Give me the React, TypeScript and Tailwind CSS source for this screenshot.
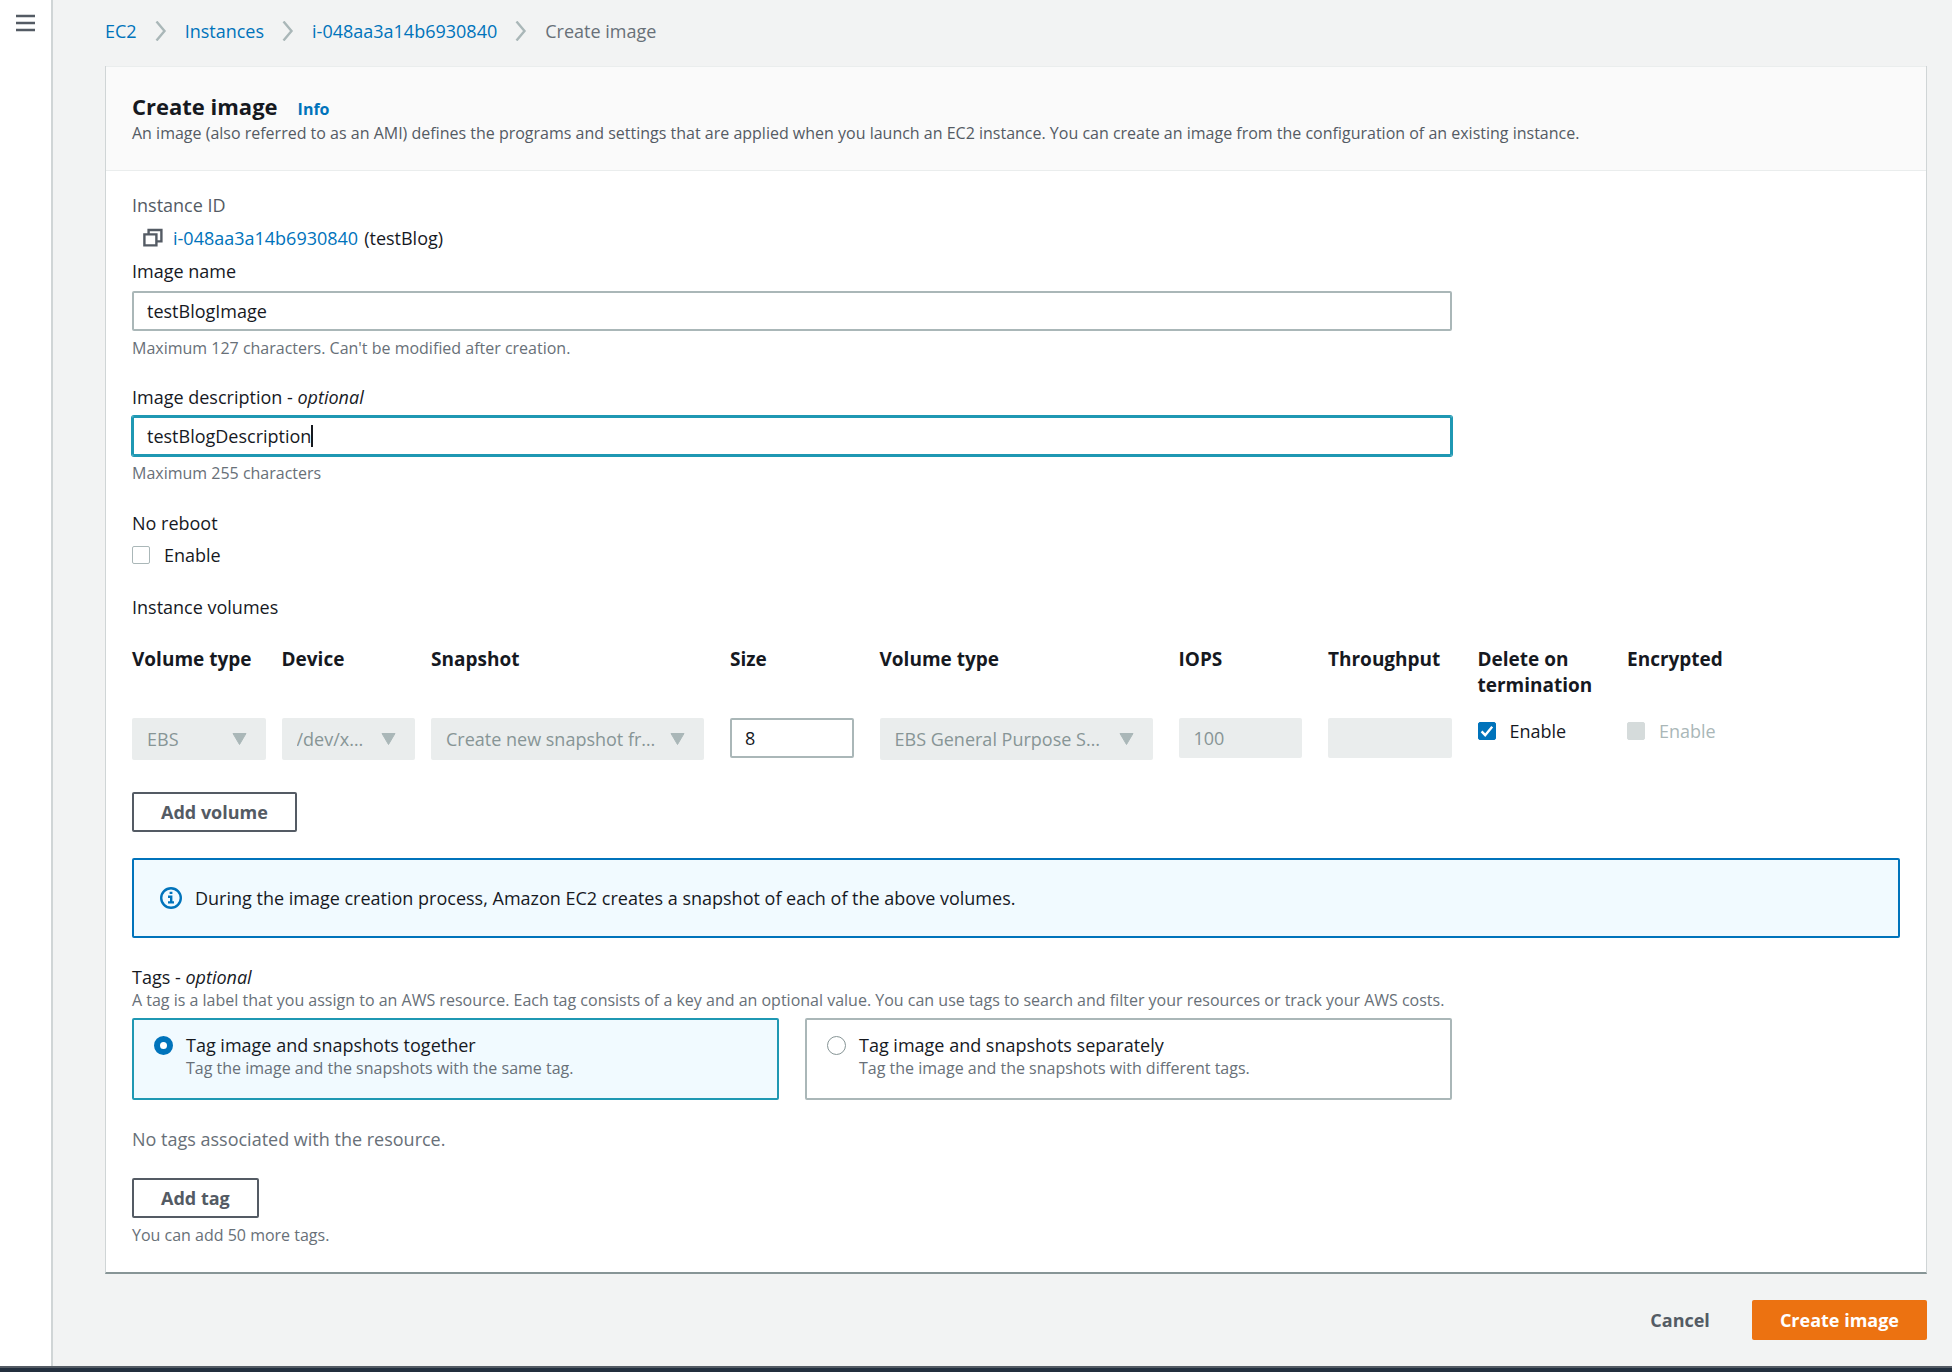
import { useState } from 'react'

const outlineButton =
  'h-10 rounded-xs border-2 border-[#545b64] bg-white px-[27px] font-bold text-[#545b64] hover:bg-[#fafafa]'

function Separator() {
  return (
    <svg className="mx-[18px] h-5 w-[12px]" viewBox="0 0 12 20" fill="none" aria-hidden="true">
      <path d="M1.5 0.5 L9.5 10 L1.5 19.5" stroke="#aab7b8" strokeWidth="2.4" />
    </svg>
  )
}

function CopyIcon() {
  return (
    <svg className="h-5 w-5" viewBox="0 0 20 20" fill="none" stroke="#545b64" strokeWidth="2.4" aria-hidden="true">
      <path d="M1.4 6.4h12v11h-12z" />
      <path d="M5.6 6V2h12.8v11.4h-4.6" />
    </svg>
  )
}

function DisabledSelect({ label, value }: { label: string; value: string }) {
  return (
    <div className="relative">
      <select
        aria-label={label}
        disabled
        className="h-[42px] w-full appearance-none rounded-xs bg-[#eaeded] pr-8 pl-[15px] text-[#879596] opacity-100"
      >
        <option>{value}</option>
      </select>
      <svg className="pointer-events-none absolute top-[15px] right-[19px] h-3 w-[15px]" viewBox="0 0 15 12" aria-hidden="true">
        <path d="M1 0.5h13L7.5 11.5z" fill="#aab7b8" stroke="#aab7b8" strokeLinejoin="round" />
      </svg>
    </div>
  )
}

function Checkbox({ label, checked, disabled, onChange }: any) {
  return (
    <label className={`flex items-center gap-[14px] ${disabled ? 'text-[#aab7b8]' : ''}`}>
      <span className="relative flex">
        <input
          type="checkbox"
          checked={checked}
          disabled={disabled}
          onChange={(e) => onChange?.(e.target.checked)}
          className="h-[18px] w-[18px] appearance-none rounded-xs border border-[#aab7b8] bg-white checked:border-[#0073bb] checked:bg-[#0073bb] disabled:border-[#d5dbdb] disabled:bg-[#d5dbdb]"
        />
        {checked && (
          <svg className="pointer-events-none absolute inset-0 h-[18px] w-[18px]" viewBox="0 0 18 18" fill="none" aria-hidden="true">
            <path d="M3.6 9.4l3.6 3.8 7-8.4" stroke="#fff" strokeWidth="2.4" />
          </svg>
        )}
      </span>
      {label}
    </label>
  )
}

function TagTile({ title, text, checked, onSelect }: any) {
  return (
    <label
      className={`flex min-h-[82px] items-start gap-[13px] rounded-xs border-2 px-5 pt-3 ${
        checked ? 'border-[#1f98b3] bg-[#f1faff]' : 'border-[#aab7b8] bg-white'
      }`}
    >
      <input
        type="radio"
        name="tagMode"
        checked={checked}
        onChange={onSelect}
        className="mt-1 h-[19px] w-[19px] shrink-0 appearance-none rounded-full border border-[#879596] bg-white checked:border-[6px] checked:border-[#0073bb]"
      />
      <span>
        <span className="block">{title}</span>
        <span className="block text-base leading-5 text-[#687078]">{text}</span>
      </span>
    </label>
  )
}

export default function App() {
  const [name, setName] = useState('testBlogImage')
  const [description, setDescription] = useState('testBlogDescription')
  const [noReboot, setNoReboot] = useState(false)
  const [size, setSize] = useState('8')
  const [deleteOnTermination, setDeleteOnTermination] = useState(true)
  const [tagMode, setTagMode] = useState('together')

  return (
    <div className="flex min-h-screen flex-col bg-[#f2f3f3] font-['Open_Sans',sans-serif] text-lg leading-[26px] text-[#16191f]">
      <div className="flex flex-1">
        <aside className="w-[53px] shrink-0 border-r-2 border-[#d0d5d6] bg-white pt-[14px] pl-4">
          <button aria-label="Open navigation" className="block">
            <svg className="h-[18px] w-[19px]" viewBox="0 0 19 18" stroke="#545b64" strokeWidth="2.4" aria-hidden="true">
              <path d="M0 2h19M0 9h19M0 16h19" />
            </svg>
          </button>
        </aside>

        <main className="min-w-0 flex-1 pt-[18px] pr-[25px] pb-6 pl-[52px]">
          <nav aria-label="Breadcrumb" className="flex items-center text-[#0073bb]">
            <a href="#ec2">EC2</a>
            <Separator />
            <a href="#instances">Instances</a>
            <Separator />
            <a href="#instance">i-048aa3a14b6930840</a>
            <Separator />
            <span className="text-[#687078]">Create image</span>
          </nav>

          <section className="mt-[22px] border-x border-b-2 border-x-[#d0d5d6] border-b-[#879596] bg-white">
            <header className="border-t border-b border-t-[#eaeded] border-b-[#eaeded] bg-[#fafafa] px-[26px] pt-[23px] pb-[26px]">
              <div className="flex items-baseline gap-5">
                <h1 className="text-[22px] leading-8 font-bold">Create image</h1>
                <a href="#info" className="text-base leading-5 font-bold text-[#0073bb]">Info</a>
              </div>
              <p className="text-base leading-[22px] text-[#545b64]">
                An image (also referred to as an AMI) defines the programs and settings that are applied when you launch an EC2 instance. You can create an image from the configuration of an existing instance.
              </p>
            </header>

            <form className="px-[26px] pt-[21px] pb-[26px]" onSubmit={(e) => e.preventDefault()}>
              <div className="text-[#545b64]">Instance ID</div>
              <div className="mt-[7px] flex items-center pl-[11px]">
                <button type="button" aria-label="Copy instance ID"><CopyIcon /></button>
                <a href="#instance" className="mr-[6px] ml-[10px] text-[#0073bb]">i-048aa3a14b6930840</a>
                <span>(testBlog)</span>
              </div>

              <div className="mt-[7px] mr-[calc(25%+6px)]">
                <label htmlFor="name" className="block">Image name</label>
                <input
                  id="name"
                  value={name}
                  onChange={(e) => setName(e.target.value)}
                  className="mt-[7px] block h-10 w-full rounded-xs border-2 border-[#aab7b8] px-[13px] outline-none"
                />
                <p className="mt-[6px] text-base leading-[22px] text-[#687078]">
                  Maximum 127 characters. Can't be modified after creation.
                </p>

                <label htmlFor="description" className="mt-[25px] block">
                  Image description - <i>optional</i>
                </label>
                <div className="mt-[6px] flex h-10 items-center rounded-xs border-2 border-[#1f98b3] px-[13px] ring-1 ring-[#1f98b3]">
                  <input
                    id="description"
                    value={description}
                    onChange={(e) => setDescription(e.target.value)}
                    className="[field-sizing:content] caret-transparent outline-none"
                  />
                  <span className="h-[22px] w-[2px] bg-[#16191f]" />
                </div>
                <p className="mt-[6px] text-base leading-[22px] text-[#687078]">Maximum 255 characters</p>
              </div>

              <div className="mt-[26px]">No reboot</div>
              <div className="mt-[6px] flex">
                <Checkbox label="Enable" checked={noReboot} onChange={setNoReboot} />
              </div>

              <div className="mt-[26px]">Instance volumes</div>
              <table className="mt-[26px] w-[calc(100%+26px)] table-fixed text-left align-top">
                <colgroup>
                  <col />
                  <col />
                  <col span={2} />
                  <col />
                  <col span={2} />
                  <col span={5} />
                </colgroup>
                <thead className="text-[19px]">
                  <tr className="align-top">
                    <th>Volume type</th>
                    <th>Device</th>
                    <th colSpan={2}>Snapshot</th>
                    <th>Size</th>
                    <th colSpan={2}>Volume type</th>
                    <th>IOPS</th>
                    <th>Throughput</th>
                    <th>Delete on termination</th>
                    <th colSpan={2}>Encrypted</th>
                  </tr>
                </thead>
                <tbody>
                  <tr className="align-top">
                    <td className="pt-5 pr-4"><DisabledSelect label="Volume type" value="EBS" /></td>
                    <td className="pt-5 pr-4"><DisabledSelect label="Device" value="/dev/x…" /></td>
                    <td colSpan={2} className="pt-5 pr-[26px]"><DisabledSelect label="Snapshot" value="Create new snapshot fr…" /></td>
                    <td className="pt-5 pr-[26px]">
                      <input
                        aria-label="Size"
                        value={size}
                        onChange={(e) => setSize(e.target.value)}
                        className="block h-10 w-full rounded-xs border-2 border-[#aab7b8] px-[13px]"
                      />
                    </td>
                    <td colSpan={2} className="pt-5 pr-[26px]"><DisabledSelect label="EBS volume type" value="EBS General Purpose S…" /></td>
                    <td className="pt-5 pr-[26px]">
                      <input aria-label="IOPS" disabled value="100" className="block h-10 w-full rounded-xs bg-[#eaeded] px-[15px] text-[#879596]" />
                    </td>
                    <td className="pt-5 pr-[26px]">
                      <input aria-label="Throughput" disabled value="" className="block h-10 w-full rounded-xs bg-[#eaeded] px-[15px]" />
                    </td>
                    <td className="pt-5">
                      <Checkbox label="Enable" checked={deleteOnTermination} onChange={setDeleteOnTermination} />
                    </td>
                    <td colSpan={2} className="pt-5"><Checkbox label="Enable" checked={false} disabled /></td>
                  </tr>
                </tbody>
              </table>

              <button type="button" className={`mt-8 ${outlineButton}`}>Add volume</button>

              <div className="mt-[26px] flex min-h-20 items-center gap-[13px] rounded-xs border-2 border-[#0073bb] bg-[#f1faff] px-[26px]">
                <svg className="h-[22px] w-[22px]" viewBox="0 0 22 22" fill="none" stroke="#0073bb" aria-hidden="true">
                  <circle cx="11" cy="11" r="9.8" strokeWidth="2.4" />
                  <path d="M9.6 5.9h2.8M8 9.8h3.2v5.6M8 15.4h6" strokeWidth="2.4" />
                </svg>
                <span>During the image creation process, Amazon EC2 creates a snapshot of each of the above volumes.</span>
              </div>

              <div className="mt-[26px]">Tags - <i>optional</i></div>
              <p className="text-base leading-5 text-[#687078]">
                A tag is a label that you assign to an AWS resource. Each tag consists of a key and an optional value. You can use tags to search and filter your resources or track your AWS costs.
              </p>
              <div className="mt-2 mr-[calc(25%+6px)] grid grid-cols-2 gap-[26px]">
                <TagTile
                  title="Tag image and snapshots together"
                  text="Tag the image and the snapshots with the same tag."
                  checked={tagMode === 'together'}
                  onSelect={() => setTagMode('together')}
                />
                <TagTile
                  title="Tag image and snapshots separately"
                  text="Tag the image and the snapshots with different tags."
                  checked={tagMode === 'separately'}
                  onSelect={() => setTagMode('separately')}
                />
              </div>

              <p className="mt-[26px] text-[#687078]">No tags associated with the resource.</p>
              <button type="button" className={`mt-[26px] ${outlineButton}`}>Add tag</button>
              <p className="mt-[6px] text-base leading-[22px] text-[#687078]">You can add 50 more tags.</p>
            </form>
          </section>

          <div className="mt-[26px] flex justify-end gap-[14px]">
            <button className="h-10 px-7 font-bold text-[#545b64]">Cancel</button>
            <button className="h-10 rounded-xs bg-[#ec7211] px-7 font-bold text-white hover:bg-[#eb5f07]">Create image</button>
          </div>
        </main>
      </div>
      <footer className="h-[6px] border-t-2 border-[#545b64] bg-[#232f3e]" />
    </div>
  )
}
